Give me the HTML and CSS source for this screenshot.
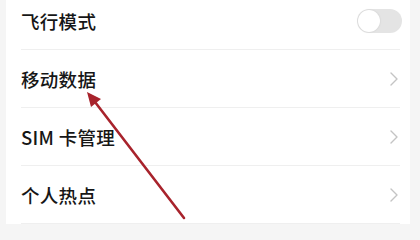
FILE: index.html
```html
<!DOCTYPE html>
<html lang="zh-CN">
<head>
<meta charset="utf-8">
<link rel="stylesheet" href="styles.css">
</head>
<body>
<div class="page">
  <ul class="card">
    <li class="row">
      <span class="label">飞行模式</span>
      <span class="toggle"><span class="knob"></span></span>
    </li>
    <li class="row">
      <span class="label">移动数据</span>
      <svg class="chev" viewBox="0 0 10 16"><path d="M2 2 L8 8 L2 14" fill="none" stroke="#c4c4c4" stroke-width="1.4" stroke-linecap="round" stroke-linejoin="round"/></svg>
    </li>
    <li class="row">
      <span class="label">SIM 卡管理</span>
      <svg class="chev" viewBox="0 0 10 16"><path d="M2 2 L8 8 L2 14" fill="none" stroke="#c4c4c4" stroke-width="1.4" stroke-linecap="round" stroke-linejoin="round"/></svg>
    </li>
    <li class="row">
      <span class="label">个人热点</span>
      <svg class="chev" viewBox="0 0 10 16"><path d="M2 2 L8 8 L2 14" fill="none" stroke="#c4c4c4" stroke-width="1.4" stroke-linecap="round" stroke-linejoin="round"/></svg>
    </li>
  </ul>
  <svg class="arrow" viewBox="0 0 420 224" width="420" height="224">
    <line x1="184" y1="218" x2="95" y2="102" stroke="#a8232c" stroke-width="2.6" stroke-linecap="round"/>
    <polygon points="87,92 101,99 91,107" fill="#a8232c"/>
  </svg>
</div>
</body>
</html>
```

FILE: styles.css
```css
html, body {
  margin: 0;
  padding: 0;
  background: #f5f5f5;
  overflow: hidden;
}
.page {
  position: relative;
  width: 420px;
  height: 224px;
  overflow: hidden;
  padding: 0 10px 0 6px;
  box-sizing: border-box;
}
.card {
  list-style: none;
  margin: -8px 0 0 0;
  padding: 0 10px 0 15px;
  background: #ffffff;
  font-family: "Noto Sans CJK SC", "Noto Sans", sans-serif;
}
.row {
  height: 58px;
  display: flex;
  align-items: center;
  justify-content: space-between;
  border-bottom: 1.5px solid #efefef;
  box-sizing: border-box;
}
.label {
  font-size: 18.5px;
  font-weight: 500;
  color: #161616;
  letter-spacing: 0.3px;
}
.toggle {
  width: 45px;
  height: 24px;
  border-radius: 12px;
  background: #e4e4e4;
  display: flex;
  align-items: center;
  padding: 0 1px;
  box-sizing: border-box;
  margin-right: -2px;
}
.knob {
  width: 22px;
  height: 22px;
  border-radius: 50%;
  background: #ffffff;
  box-shadow: 0 0 2px rgba(0,0,0,0.12);
}
.chev {
  width: 10px;
  height: 16px;
  margin-right: 1px;
}
.arrow {
  position: absolute;
  left: 0;
  top: 0;
}
```
